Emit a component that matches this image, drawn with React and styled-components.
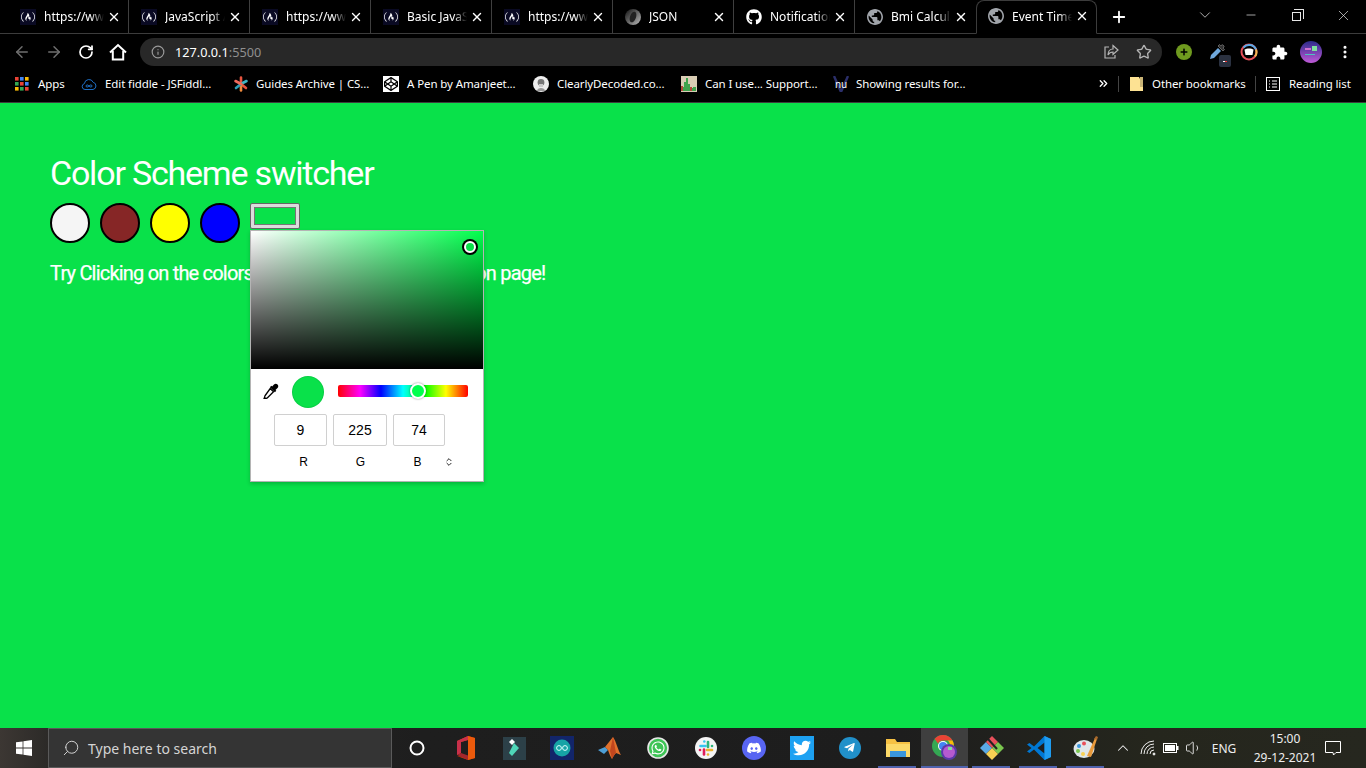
import React from 'react';
import styled, { createGlobalStyle } from 'styled-components';
import {
  ArrowLeft, ArrowRight, RotateCw, Info, Star, Search, ChevronDown, ChevronUp,
  Minus, X, Plus, EllipsisVertical, ChevronsUpDown, ChevronsRight, Volume1,
} from 'lucide-react';
import {
  FaFreeCodeCamp, FaGithub, FaWhatsapp, FaDiscord, FaTwitter,
  FaTelegramPlane, FaCodepen, FaPlus,
} from 'react-icons/fa';

const UI_FONT = '"Noto Sans", "Open Sans", sans-serif';
const PAGE_COLOR = 'rgb(9, 225, 74)';

const GlobalStyle = createGlobalStyle`
  html, body { margin: 0; padding: 0; height: 100%; overflow: hidden; }
  #root { height: 100%; }
  * { box-sizing: border-box; }
`;

const Screen = styled.div`
  width: 1366px;
  height: 768px;
  display: flex;
  flex-direction: column;
  overflow: hidden;
  background: #000;
  font-family: ${UI_FONT};
`;

/* ---------- tab strip ---------- */

const TabStrip = styled.div`
  height: 34px;
  flex: none;
  display: flex;
  align-items: stretch;
  padding-left: 8px;
  background: #000;
  border-bottom: 1px solid #3c3c3c;
`;

const Tab = styled.div`
  position: relative;
  width: 121px;
  height: ${(p) => (p.$active ? '34px' : '33px')};
  flex: none;
  display: flex;
  align-items: center;
  padding-left: ${(p) => (p.$active ? '11px' : '12px')};
  padding-bottom: ${(p) => (p.$active ? '2px' : '0')};
  color: #fff;
  font-size: 12px;
  background: #000;
  border-right: 1px solid ${(p) => (p.$active || p.$last ? 'transparent' : '#3f3f3f')};
  ${(p) => p.$active && `
    border: 1px solid #3c3c3c;
    border-bottom: 1px solid #000;
    border-radius: 8px 8px 0 0;
  `}
`;

const Favicon = styled.span`
  width: 16px;
  height: 16px;
  flex: none;
  display: flex;
  align-items: center;
  justify-content: center;
  background: ${(p) => p.$bg || 'transparent'};
  color: ${(p) => p.$fg || '#fff'};
`;

const TabTitle = styled.span`
  width: 60px;
  margin-left: 8px;
  white-space: nowrap;
  overflow: hidden;
  mask-image: linear-gradient(to right, #000 78%, transparent 100%);
`;

const TabClose = styled.span`
  margin-left: 2px;
  width: 16px;
  display: flex;
  justify-content: center;
  color: #fff;
`;

const NewTab = styled.div`
  width: 44px;
  display: flex;
  align-items: center;
  justify-content: center;
  color: #fff;
`;

const WindowControls = styled.div`
  margin-left: auto;
  display: flex;
  color: #e6e6e6;
  margin-top: -3px;
`;

const WindowButton = styled.div`
  width: 46px;
  display: flex;
  align-items: center;
  justify-content: center;
`;

const RestoreGlyph = styled.span`
  position: relative;
  width: 9px;
  height: 9px;
  border: 1px solid #e6e6e6;
  margin: 2px 1px 0 0;
  &::before {
    content: '';
    position: absolute;
    top: -4px;
    right: -4px;
    width: 9px;
    height: 9px;
    border-top: 1px solid #e6e6e6;
    border-right: 1px solid #e6e6e6;
  }
`;

/* ---------- toolbar ---------- */

const Toolbar = styled.div`
  height: 33px;
  flex: none;
  display: flex;
  align-items: center;
  padding: 4px 0 1px 6px;
  background: #000;
`;

const NavButton = styled.div`
  width: 32px;
  display: flex;
  justify-content: center;
  color: ${(p) => (p.$dim ? '#6f6f6f' : '#fff')};
`;

const Omnibox = styled.div`
  width: 1022px;
  height: 28px;
  margin-left: 6px;
  display: flex;
  align-items: center;
  padding: 0 10px 0 11px;
  border-radius: 14px;
  background: #282828;
  color: #9a9a9a;
`;

const Url = styled.span`
  margin-left: 10px;
  font-size: 12.7px;
  color: #fff;
  & > em { font-style: normal; color: #8f8f8f; }
`;

const OmniActions = styled.div`
  margin-left: auto;
  display: flex;
  align-items: center;
  gap: 17px;
  color: #b5b5b5;
`;

const Extensions = styled.div`
  display: flex;
  align-items: center;
  margin-left: 6px;
`;

const ExtSlot = styled.div`
  position: relative;
  width: ${(p) => p.$w || 32}px;
  display: flex;
  justify-content: center;
  align-items: center;
  color: #fff;
`;

const ExtBadge = styled.span`
  position: absolute;
  right: 3px;
  bottom: -6px;
  width: 12px;
  height: 12px;
  border-radius: 2px;
  background: #2a3140;
  display: flex;
  align-items: center;
  justify-content: center;
  &::after {
    content: '';
    width: 4px;
    height: 1px;
    background: linear-gradient(to right, #fff 50%, #e33 50%);
  }
`;

/* ---------- bookmarks bar ---------- */

const BookmarkBar = styled.div`
  height: 36px;
  flex: none;
  display: flex;
  align-items: center;
  padding: 0 15px 2px 15px;
  background: #000;
  border-bottom: 1px solid #3c3c3c;
  color: #fff;
  font-size: 11.5px;
  letter-spacing: -0.1px;
`;

const Bookmark = styled.div`
  width: ${(p) => p.$w}px;
  flex: none;
  display: flex;
  align-items: center;
  gap: ${(p) => p.$gap || 8}px;
  white-space: nowrap;
  & > svg { flex: none; }
`;

const BarRight = styled.div`
  margin-left: auto;
  display: flex;
  align-items: center;
`;

const BarDivider = styled.span`
  width: 1px;
  height: 16px;
  background: #444;
  margin: 0 ${(p) => p.$right}px 0 ${(p) => p.$left}px;
`;

const NuLabel = styled.span`
  font-size: 10px;
  line-height: 10px;
  color: #fff;
`;

const NuIcon = styled.span`
  position: relative;
  width: 16px;
  height: 16px;
  flex: none;
  display: flex;
  align-items: center;
  justify-content: center;
  color: #2b2f6b;
  & > svg { position: absolute; left: 0; top: 0; }
  & > span { position: relative; }
`;

/* ---------- page ---------- */

const Page = styled.main`
  flex: 1;
  padding: 50px 0 0 50px;
  background: ${PAGE_COLOR};
  color: #fff;
  font-family: Roboto, sans-serif;
`;

const Heading = styled.h1`
  margin: 0;
  height: 40px;
  font-size: 34px;
  line-height: 40px;
  font-weight: 400;
  letter-spacing: -1.2px;
`;

const SwatchRow = styled.div`
  margin-top: 10px;
  display: flex;
  align-items: flex-start;
  gap: 10px;
`;

const Swatch = styled.button`
  width: 40px;
  height: 40px;
  padding: 0;
  border-radius: 50%;
  border: 2px solid #000;
  background: ${(p) => p.$color};
`;

const ColorField = styled.div`
  position: relative;
  width: 50px;
  height: 26px;
  padding: 3px;
  border: 1px solid #666;
  border-radius: 2px;
  background: #dcdcdc;
`;

const ColorFieldFill = styled.div`
  height: 100%;
  border: 1px solid #767676;
  background: ${PAGE_COLOR};
`;

const Hint = styled.p`
  margin: 18px 0 0;
  height: 24px;
  font-size: 20px;
  line-height: 24px;
  font-weight: 400;
  letter-spacing: -0.8px;
  -webkit-text-stroke: 0.25px #fff;
`;

/* ---------- colour picker popup ---------- */

const Picker = styled.div`
  position: absolute;
  top: 26px;
  left: -1px;
  width: 234px;
  height: 252px;
  background: #fff;
  border: 1px solid #b4b4b4;
  box-shadow: 0 2px 4px rgba(0, 0, 0, 0.2);
  color: #000;
  font-family: "Liberation Sans", Arial, sans-serif;
`;

const SatArea = styled.div`
  position: relative;
  height: 138px;
  background:
    linear-gradient(to top, #000, rgba(0, 0, 0, 0)),
    linear-gradient(to right, #fff, hsl(138, 100%, 50%));
`;

const SatMarker = styled.span`
  position: absolute;
  left: 213px;
  top: 10px;
  width: 12px;
  height: 12px;
  border-radius: 50%;
  background: ${PAGE_COLOR};
  border: 2px solid #fff;
  box-shadow: 0 0 0 2px #000;
`;

const PickerControls = styled.div`
  display: flex;
  align-items: center;
  height: 46px;
  padding: 0 0 0 12px;
`;

const Dropper = styled.span`
  width: 16px;
  height: 16px;
  margin-top: -2px;
  display: flex;
  justify-content: center;
`;

const Preview = styled.span`
  width: 32px;
  height: 32px;
  margin-left: 13px;
  border-radius: 50%;
  background: ${PAGE_COLOR};
  border: 1px solid rgba(0, 0, 0, 0.08);
`;

const HueTrack = styled.div`
  position: relative;
  width: 130px;
  height: 12px;
  margin: -2px 0 0 14px;
  border-radius: 2px;
  background: linear-gradient(to right, #f00 0%, #f0f 17%, #00f 33%, #0ff 50%, #0f0 67%, #ff0 83%, #f00 100%);
`;

const HueThumb = styled.span`
  position: absolute;
  left: 72px;
  top: -2px;
  width: 16px;
  height: 16px;
  border-radius: 50%;
  background: hsl(138, 100%, 50%);
  border: 2px solid #fff;
  box-shadow: 0 0 2px rgba(0, 0, 0, 0.5);
`;

const InputRow = styled.div`
  display: flex;
  gap: 6px;
  margin-top: -1px;
  padding-left: 23px;
`;

const ChannelInput = styled.div`
  width: ${(p) => p.$w}px;
  height: 32px;
  display: flex;
  align-items: center;
  justify-content: center;
  border: 1px solid #d0d0d0;
  border-radius: 2px;
  font-size: 14px;
  color: #000;
`;

const LabelRow = styled.div`
  display: grid;
  grid-template-columns: repeat(3, 57px) 6px;
  padding-left: 24px;
  margin-top: 9px;
  height: 14px;
  align-items: center;
  font-size: 12px;
`;

const ChannelLabel = styled.span`
  text-align: center;
`;

const ModeToggle = styled.span`
  display: flex;
  justify-content: center;
  & > svg { flex: none; }
`;

/* ---------- taskbar ---------- */

const Taskbar = styled.footer`
  height: 40px;
  flex: none;
  display: flex;
  align-items: stretch;
  color: #fff;
  background: linear-gradient(to right, #3c3733 0, #2c2a28 48px, #1e1e1e 420px, #1d1d1d 900px, #25261d 1150px, #26271f 1366px);
`;

const StartButton = styled.div`
  width: 48px;
  flex: none;
  display: flex;
  align-items: center;
  justify-content: center;
`;

const SearchBox = styled.div`
  width: 344px;
  flex: none;
  display: flex;
  align-items: center;
  padding-left: 13px;
  background: #343434;
  border: 1px solid #5a5a5a;
  color: #d4d4d4;
  font-size: 14px;
`;

const SearchText = styled.span`
  margin-left: 8px;
`;

const TaskIcon = styled.div`
  position: relative;
  width: ${(p) => p.$w || 48}px;
  flex: none;
  display: flex;
  align-items: center;
  justify-content: center;
  background: ${(p) => (p.$current ? '#3f3f3f' : 'transparent')};
  ${(p) => p.$running && `
    &::after {
      content: '';
      position: absolute;
      bottom: 0;
      height: 2px;
      left: ${p.$current ? 0 : 4}px;
      right: ${p.$current ? 0 : 5}px;
      background: #4f62ad;
    }
  `}
`;

const Tray = styled.div`
  flex: none;
  margin-left: auto;
  display: flex;
  align-items: center;
  padding-right: 21px;
  color: #eee;
`;

const TrayIcon = styled.span`
  width: ${(p) => p.$w || 23}px;
  display: flex;
  justify-content: center;
`;

const Lang = styled.span`
  width: 38px;
  text-align: center;
  margin-right: 6px;
  font-size: 12px;
`;

const Clock = styled.div`
  width: 72px;
  text-align: center;
  font-size: 12px;
  line-height: 19px;
`;

const Notify = styled.span`
  width: 24px;
  display: flex;
  justify-content: center;
`;

/* ---------- drawn icons ---------- */

const HomeIcon = () => (
  <svg width="18" height="18" viewBox="0 0 18 18" fill="none" stroke="#fff" strokeWidth="2">
    <path d="M1 9.5L9 2l8 7.5M3.8 8v8.5h10.4V8" />
  </svg>
);

const ShareIcon = () => (
  <svg width="16" height="16" viewBox="0 0 16 16" fill="none" stroke="#b5b5b5" strokeWidth="1.2">
    <path d="M6 3H2v11h10v-3" />
    <path d="M10 1.5L15 6l-5 4.5V8C7.5 8 6 9 5 11c0-3.5 2-6 5-6z" />
  </svg>
);

const GlobeGlyph = () => (
  <svg width="16" height="16" viewBox="2 2 20 20" fill="#a0a4aa">
    <path d="M12 2C6.48 2 2 6.48 2 12s4.48 10 10 10 10-4.48 10-10S17.52 2 12 2zm-1 17.93c-3.95-.49-7-3.85-7-7.93 0-.62.08-1.21.21-1.79L9 15v1c0 1.1.9 2 2 2v1.93zm6.9-2.54c-.26-.81-1-1.39-1.9-1.39h-1v-3c0-.55-.45-1-1-1H8v-2h2c.55 0 1-.45 1-1V7h2c1.1 0 2-.9 2-2v-.41c2.93 1.19 5 4.06 5 7.41 0 2.08-.8 3.97-2.1 5.39z" />
  </svg>
);

const PuzzleIcon = () => (
  <svg width="17" height="17" viewBox="0 0 24 24" fill="#fff">
    <path d="M20.5 11H19V7c0-1.1-.9-2-2-2h-4V3.5C13 2.12 11.88 1 10.5 1S8 2.12 8 3.5V5H4c-1.1 0-1.99.9-1.99 2v3.8H3.5c1.49 0 2.7 1.21 2.7 2.7s-1.21 2.7-2.7 2.7H2V20c0 1.1.9 2 2 2h3.8v-1.5c0-1.49 1.21-2.7 2.7-2.7 1.49 0 2.7 1.21 2.7 2.7V22H17c1.1 0 2-.9 2-2v-4h1.5c1.38 0 2.5-1.12 2.5-2.5S21.88 11 20.5 11z" />
  </svg>
);

const AppsIcon = () => {
  const colors = ['#ea4335', '#4285f4', '#fbbc05', '#34a853', '#ea4335', '#4285f4', '#fbbc05', '#34a853', '#ea4335'];
  return (
    <svg width="14" height="14" viewBox="0 0 14 14">
      {colors.map((c, i) => (
        <rect key={i} x={(i % 3) * 5} y={Math.floor(i / 3) * 5} width="3.6" height="3.6" fill={c} />
      ))}
    </svg>
  );
};

const FiddleIcon = () => (
  <svg width="16" height="16" viewBox="0 0 16 16" fill="none" stroke="#1f6fc4" strokeWidth="1">
    <path d="M4 13.5a3 3 0 0 1-.6-5.9 4.6 4.6 0 0 1 8.8-1.3 3.7 3.7 0 0 1-.2 7.2z" />
    <path d="M8 10c-1-1.4-3-1.4-3 0s2 1.4 3 0 3-1.4 3 0-2 1.4-3 0z" />
  </svg>
);

const GuidesIcon = () => (
  <svg width="16" height="16" viewBox="0 0 16 16" strokeWidth="2.6" strokeLinecap="round">
    <path d="M8 8V1.5" stroke="#e8553f" />
    <path d="M8 8l5.5-3" stroke="#40b4c4" />
    <path d="M8 8l5 4" stroke="#e8553f" />
    <path d="M8 8v6.5" stroke="#f08a3c" />
    <path d="M8 8l-5 4" stroke="#2f9fb8" />
    <path d="M8 8L2.5 5" stroke="#f06a5c" />
  </svg>
);

const ClearlyIcon = () => (
  <svg width="16" height="16" viewBox="0 0 16 16">
    <circle cx="8" cy="8" r="8" fill="#eee" />
    <circle cx="8" cy="6.5" r="3.4" fill="#777" />
    <path d="M4 15c0-4 8-4 8 0z" fill="#999" />
    <rect x="6" y="8" width="4" height="3" fill="#ccc" />
  </svg>
);

const CanIUseIcon = () => (
  <svg width="16" height="16" viewBox="0 0 16 16">
    <rect width="16" height="16" fill="#d9cdb4" />
    <path d="M1 15V11h2V6h2V2h2v6h2v4h3v-1h3v4z" fill="#3fa34d" />
    <rect x="0" y="10" width="2" height="5" fill="#b5483a" />
    <rect x="9" y="11" width="2" height="4" fill="#b5483a" />
  </svg>
);

const FolderIcon = () => (
  <svg width="13" height="16" viewBox="0 0 13 16">
    <path d="M0 1h9l1 2 0 8h3v4H0z" fill="#fde293" />
    <path d="M10 1l3 0 0 13-3 0z" fill="#fde293" opacity="0.8" />
  </svg>
);

const ReadingIcon = () => (
  <svg width="14" height="14" viewBox="0 0 14 14" fill="none" stroke="#fff">
    <rect x="0.5" y="0.5" width="13" height="13" />
    <path d="M3 4h1M6 4h5M3 7h1M6 7h5M3 10h1M6 10h5" />
  </svg>
);

const DropperExt = () => (
  <svg width="18" height="18" viewBox="0 0 18 18">
    <path d="M2 16l1-4 7-7 3 3-7 7z" fill="#6fa8dc" />
    <path d="M10 3l5 5 1.5-1.5-1.3-1.3 1-2-1.5-1.5-2 1-1.2-1.2z" fill="#333" stroke="#aaa" strokeWidth="0.5" />
  </svg>
);

const RingExt = () => (
  <svg width="18" height="18" viewBox="0 0 18 18" fill="none">
    <circle cx="9" cy="9" r="7.5" stroke="#e8505b" strokeWidth="2" />
    <path d="M3.5 4.5A7.5 7.5 0 0 1 16 6.5" stroke="#5aa9e6" strokeWidth="2" />
    <path d="M16 6.5A7.5 7.5 0 0 1 15 13.5" stroke="#f2b950" strokeWidth="2" />
    <path d="M4.5 6.5c2-1.5 7-1.5 9 0l-1 5.5H5.5z" fill="#fff" />
  </svg>
);

const Avatar = () => (
  <svg width="22" height="22" viewBox="0 0 22 22">
    <defs>
      <linearGradient id="avatarFill" x1="0" y1="0" x2="0" y2="1">
        <stop offset="0" stopColor="#2c2a8a" />
        <stop offset="1" stopColor="#c05ad8" />
      </linearGradient>
    </defs>
    <circle cx="11" cy="11" r="11" fill="url(#avatarFill)" />
    <rect x="12" y="5" width="5" height="5" fill="#7fe0a0" />
    <rect x="5" y="7" width="6" height="2" fill="#d070d0" />
    <rect x="5" y="13" width="10" height="1" fill="#4fc0c0" />
  </svg>
);

const EyeDropper = () => (
  <svg width="16" height="16" viewBox="0 0 16 16">
    <path d="M7.2 5.5l3.3 3.3-6 6c-.5.5-1 .6-1.6.4l-1.3.8-.6-.6.8-1.3c-.2-.6 0-1.2.4-1.6z" fill="#fff" stroke="#000" strokeWidth="1.3" />
    <path d="M11 1.5c1-1 2.5-1 3.5 0s1 2.5 0 3.5L12.5 7l.8.8-1.4 1.4-5-5 1.4-1.4.8.8z" fill="#000" />
  </svg>
);

const JsonIcon = () => (
  <svg width="16" height="16" viewBox="0 0 16 16">
    <defs>
      <linearGradient id="jsonFill" x1="0" y1="0" x2="1" y2="1">
        <stop offset="0" stopColor="#111" />
        <stop offset="1" stopColor="#bbb" />
      </linearGradient>
    </defs>
    <circle cx="8" cy="8" r="8" fill="url(#jsonFill)" />
    <ellipse cx="8" cy="8" rx="3" ry="5.5" fill="#222" transform="rotate(20 8 8)" />
  </svg>
);

const WindowsLogo = () => (
  <svg width="16" height="16" viewBox="0 0 16 16" fill="#fff">
    <path d="M0 2.3l6.6-.9v6.2H0zM7.4 1.3L16 0v7.6H7.4zM0 8.4h6.6v6.2L0 13.7zM7.4 8.4H16V16l-8.6-1.3z" />
  </svg>
);

const CortanaIcon = () => (
  <svg width="16" height="16" viewBox="0 0 16 16" fill="none" stroke="#fff" strokeWidth="2">
    <circle cx="8" cy="8" r="6.5" />
  </svg>
);

const OfficeIcon = () => (
  <svg width="20" height="24" viewBox="0 0 20 24">
    <path d="M1 5l11-5 7 2v20l-7 2-11-4 11 1V4L5 6v11l-4 2z" fill="#d83b01" />
    <path d="M1 5l11-5v4L5 6v11l-4 2z" fill="#c8304a" />
    <path d="M1 19l4-2 7 2.5V24z" fill="#a4262c" />
    <path d="M12 0l7 2v20l-7 2z" fill="#eb5a0c" />
  </svg>
);

const FilmoraIcon = () => (
  <svg width="23" height="23" viewBox="0 0 23 23">
    <rect width="23" height="23" fill="#2c4048" />
    <path d="M6 5l3-3 3 3-3 3z" fill="#fff" />
    <path d="M11 6l5 5-7 8-3-3z" fill="#4fd6b8" />
  </svg>
);

const ArduinoIcon = () => (
  <svg width="24" height="24" viewBox="0 0 24 24" fill="none">
    <rect width="24" height="24" fill="#12256a" />
    <circle cx="12" cy="12" r="8.5" fill="#16a3a6" />
    <circle cx="9" cy="12" r="2.4" stroke="#dff" strokeWidth="1" />
    <circle cx="15" cy="12" r="2.4" stroke="#dff" strokeWidth="1" />
  </svg>
);

const MatlabIcon = () => (
  <svg width="24" height="24" viewBox="0 0 24 24">
    <path d="M0 14l7-3 3 3-4 4z" fill="#4d9fd6" />
    <path d="M7 11l8-10c3 4 5 13 8 18l-5-2c-2 2-3 4-4 6-2-3-3-6-4-9z" fill="#e0702c" />
    <path d="M15 1l-3 14 2 8c1-2 2-4 4-6z" fill="#c1461e" />
  </svg>
);

const WhatsappIcon = () => (
  <svg width="22" height="22" viewBox="0 0 22 22">
    <circle cx="11" cy="11" r="10" fill="#3ec456" stroke="#e8e8e8" strokeWidth="1.6" />
    <FaWhatsapp x="3.5" y="3.5" size="15" color="#fff" />
  </svg>
);

const SlackIcon = () => (
  <svg width="22" height="22" viewBox="0 0 22 22" strokeWidth="2.6" strokeLinecap="round">
    <circle cx="11" cy="11" r="11" fill="#f4f4f4" />
    <path d="M5.5 9h5" stroke="#36c5f0" />
    <path d="M9.3 4.5v0" stroke="#36c5f0" />
    <path d="M13 5v5" stroke="#2eb67d" />
    <path d="M17 9h0" stroke="#2eb67d" />
    <path d="M12 13h5" stroke="#ecb22e" />
    <path d="M13 17.5h0" stroke="#ecb22e" />
    <path d="M9 12.5v5" stroke="#e01e5a" />
    <path d="M5 13h0" stroke="#e01e5a" />
  </svg>
);

const DiscordIcon = () => (
  <svg width="24" height="24" viewBox="0 0 24 24">
    <circle cx="12" cy="12" r="12" fill="#5865f2" />
    <FaDiscord x="4.5" y="4.5" size="15" color="#fff" />
  </svg>
);

const TwitterIcon = () => (
  <svg width="24" height="24" viewBox="0 0 24 24">
    <rect width="24" height="24" fill="#1da1f2" />
    <FaTwitter x="3" y="3" size="18" color="#fff" />
  </svg>
);

const TelegramIcon = () => (
  <svg width="22" height="22" viewBox="0 0 22 22">
    <circle cx="11" cy="11" r="11" fill="#2190c9" />
    <FaTelegramPlane x="4.5" y="4.5" size="12" color="#fff" />
  </svg>
);

const ExplorerIcon = () => (
  <svg width="24" height="22" viewBox="0 0 24 22">
    <path d="M0 2h9l2 3h13v15H0z" fill="#f6c143" />
    <rect x="0" y="7" width="24" height="13" fill="#fcd968" />
    <rect x="4" y="14" width="16" height="6" fill="#3a96dd" />
  </svg>
);

const ChromeIcon = () => (
  <svg width="26" height="26" viewBox="0 0 26 26">
    <circle cx="11" cy="11" r="11" fill="#34a853" />
    <path d="M11 0a11 11 0 0 1 9.5 5.5H11a5.5 5.5 0 0 0-5 3L2.6 3.8A11 11 0 0 1 11 0z" fill="#ea4335" />
    <path d="M20.5 5.5A11 11 0 0 1 11 22l4.5-8a5 5 0 0 0 0-8.5z" fill="#fbbc05" />
    <circle cx="11" cy="11" r="5" fill="#fff" />
    <circle cx="11" cy="11" r="4" fill="#4285f4" />
    <circle cx="17" cy="17" r="8" fill="#5a3aa8" />
    <circle cx="17" cy="17" r="6" fill="#b55ad0" />
    <rect x="16" y="12" width="4" height="3" fill="#7fe0a0" />
  </svg>
);

const KrakenIcon = () => (
  <svg width="26" height="26" viewBox="0 0 26 26">
    <path d="M1 13l6-6 6 6-6 6z" fill="#5aa9e6" />
    <path d="M7 7l6-6 6 6-6 6z" fill="#e8505b" />
    <path d="M13 13l6-6 6 6-6 6z" fill="#7ac74f" />
    <path d="M7 19l6-6 6 6-6 6z" fill="#f7d154" />
    <path d="M9 4l9 10" stroke="#222" strokeWidth="2" />
  </svg>
);

const VsCodeIcon = () => (
  <svg width="24" height="24" viewBox="0 0 24 24">
    <path d="M17.5 0L24 3v18l-6.5 3L7 13.5 2.5 17 0 15.5 4.5 12 0 8.5 2.5 7 7 10.5z" fill="#0078d4" />
    <path d="M17.5 6.5L10.5 12l7 5.5z" fill="#1e1e1e" />
    <path d="M17.5 0L24 3v18l-6.5 3z" fill="#1f9cf0" />
  </svg>
);

const PaintIcon = () => (
  <svg width="26" height="26" viewBox="0 0 26 26">
    <ellipse cx="11" cy="14" rx="10.5" ry="9" fill="#dfe6ea" />
    <circle cx="6" cy="11" r="2" fill="#3a96dd" />
    <circle cx="11" cy="8.5" r="2" fill="#e8505b" />
    <circle cx="5" cy="16" r="2" fill="#7ac74f" />
    <circle cx="10" cy="19" r="2" fill="#f7d154" />
    <path d="M14 21L22 3l2 1-6 18z" fill="#e89a3c" />
    <path d="M21 4l2-3 2 1-1 3z" fill="#a86a2c" />
  </svg>
);

const SignalIcon = () => (
  <svg width="16" height="16" viewBox="0 0 16 16" fill="none" stroke="#eee">
    <path d="M1 14a13 13 0 0 1 13-13M4 14a10 10 0 0 1 10-10M7 14a7 7 0 0 1 7-7M10 14a4 4 0 0 1 4-4" />
    <circle cx="14" cy="14" r="1" fill="#eee" />
  </svg>
);

const BatteryIcon = () => (
  <svg width="16" height="10" viewBox="0 0 16 10" fill="none">
    <rect x="0.5" y="0.5" width="13" height="9" stroke="#fff" />
    <rect x="2" y="2" width="10" height="6" fill="#fff" />
    <rect x="14" y="3" width="1.5" height="4" fill="#fff" />
  </svg>
);

const NotifyIcon = () => (
  <svg width="16" height="16" viewBox="0 0 16 16" fill="none" stroke="#fff">
    <path d="M.5 1.5h15v11h-4.5L8.5 15 8 12.5H.5z" />
  </svg>
);

/* ---------- data ---------- */

const CampIcon = () => <Favicon $bg="#0a0a23"><FaFreeCodeCamp size={14} /></Favicon>;
const GlobeIcon = () => <Favicon><GlobeGlyph /></Favicon>;

const tabs = [
  { title: 'https://www.freecodecamp.org', icon: <CampIcon /> },
  { title: 'JavaScript Array', icon: <CampIcon /> },
  { title: 'https://www.freecodecamp.org', icon: <CampIcon /> },
  { title: 'Basic JavaScript', icon: <CampIcon /> },
  { title: 'https://www.freecodecamp.org', icon: <CampIcon /> },
  { title: 'JSON', icon: <Favicon><JsonIcon /></Favicon> },
  { title: 'Notifications', icon: <Favicon><FaGithub size={16} /></Favicon> },
  { title: 'Bmi Calculator', icon: <GlobeIcon />, last: true },
  { title: 'Event Timer', icon: <GlobeIcon />, active: true },
];

const bookmarks = [
  { label: 'Apps', icon: <AppsIcon />, width: 66, gap: 9 },
  { label: 'Edit fiddle - JSFiddl...', icon: <FiddleIcon />, width: 152 },
  { label: 'Guides Archive | CS...', icon: <GuidesIcon />, width: 150, gap: 7 },
  { label: 'A Pen by Amanjeet...', icon: <Favicon $bg="#fff" $fg="#000"><FaCodepen size={14} /></Favicon>, width: 150 },
  { label: 'ClearlyDecoded.co...', icon: <ClearlyIcon />, width: 148 },
  { label: 'Can I use... Support...', icon: <CanIUseIcon />, width: 152 },
  {
    label: 'Showing results for...',
    icon: (
      <NuIcon>
        <svg width="16" height="16" viewBox="0 0 16 16" fill="none" stroke="currentColor" strokeWidth="2.4"><path d="M1 0l7 16 7-16" /></svg>
        <NuLabel>nu</NuLabel>
      </NuIcon>
    ),
    width: 160,
    gap: 7,
  },
];

const taskIcons = [
  { icon: <OfficeIcon />, width: 48 },
  { icon: <FilmoraIcon />, width: 48 },
  { icon: <ArduinoIcon />, width: 48 },
  { icon: <MatlabIcon />, width: 48 },
  { icon: <WhatsappIcon />, width: 48 },
  { icon: <SlackIcon />, width: 48 },
  { icon: <DiscordIcon />, width: 48 },
  { icon: <TwitterIcon />, width: 48 },
  { icon: <TelegramIcon />, width: 48 },
  { icon: <ExplorerIcon />, width: 47, running: true },
  { icon: <ChromeIcon />, width: 47, running: true, current: true },
  { icon: <KrakenIcon />, width: 47, running: true },
  { icon: <VsCodeIcon />, width: 47, running: true },
  { icon: <PaintIcon />, width: 47, running: true },
];

const swatches = ['#f5f5f5', '#862626', '#ffff00', '#0000ff'];

const channels = [
  { label: 'R', value: '9', width: 53 },
  { label: 'G', value: '225', width: 54 },
  { label: 'B', value: '74', width: 52 },
];

const ColorPicker = () => (
  <Picker>
    <SatArea><SatMarker /></SatArea>
    <PickerControls>
      <Dropper><EyeDropper /></Dropper>
      <Preview />
      <HueTrack><HueThumb /></HueTrack>
    </PickerControls>
    <InputRow>
      {channels.map((c) => (
        <ChannelInput key={c.label} $w={c.width}>{c.value}</ChannelInput>
      ))}
    </InputRow>
    <LabelRow>
      {channels.map((c) => (
        <ChannelLabel key={c.label}>{c.label}</ChannelLabel>
      ))}
      <ModeToggle><ChevronsUpDown size={10} strokeWidth={2} /></ModeToggle>
    </LabelRow>
  </Picker>
);

export default function App() {
  return (
    <Screen>
      <GlobalStyle />
      <TabStrip>
        {tabs.map((t, i) => (
          <Tab key={i} $active={t.active} $last={t.last}>
            {t.icon}
            <TabTitle>{t.title}</TabTitle>
            <TabClose><X size={14} strokeWidth={2.4} /></TabClose>
          </Tab>
        ))}
        <NewTab><Plus size={18} strokeWidth={2.4} /></NewTab>
        <WindowControls>
          <WindowButton><ChevronDown size={18} strokeWidth={1} /></WindowButton>
          <WindowButton><Minus size={14} strokeWidth={1.2} /></WindowButton>
          <WindowButton><RestoreGlyph /></WindowButton>
          <WindowButton><X size={17} strokeWidth={1} /></WindowButton>
        </WindowControls>
      </TabStrip>

      <Toolbar>
        <NavButton $dim><ArrowLeft size={18} /></NavButton>
        <NavButton $dim><ArrowRight size={18} /></NavButton>
        <NavButton><RotateCw size={16} strokeWidth={2.6} /></NavButton>
        <NavButton><HomeIcon /></NavButton>
        <Omnibox>
          <Info size={14} />
          <Url>127.0.0.1<em>:5500</em></Url>
          <OmniActions>
            <ShareIcon />
            <Star size={16} />
          </OmniActions>
        </Omnibox>
        <Extensions>
          <ExtSlot $w={32}>
            <svg width="16" height="16" viewBox="0 0 16 16"><circle cx="8" cy="8" r="8" fill="#6f9a1f" /></svg>
            <FaPlus size={8} color="#000" style={{ position: 'absolute' }} />
          </ExtSlot>
          <ExtSlot $w={34}><DropperExt /><ExtBadge /></ExtSlot>
          <ExtSlot $w={29}><RingExt /></ExtSlot>
          <ExtSlot $w={32}><PuzzleIcon /></ExtSlot>
          <ExtSlot $w={32}><Avatar /></ExtSlot>
          <ExtSlot $w={36}><EllipsisVertical size={16} strokeWidth={2.6} /></ExtSlot>
        </Extensions>
      </Toolbar>

      <BookmarkBar>
        {bookmarks.map((b) => (
          <Bookmark key={b.label} $w={b.width} $gap={b.gap}>
            {b.icon}
            <span>{b.label}</span>
          </Bookmark>
        ))}
        <BarRight>
          <ChevronsRight size={13} strokeWidth={2.4} />
          <BarDivider $left={8} $right={11} />
          <Bookmark $w={125} $gap={9}>
            <FolderIcon />
            <span>Other bookmarks</span>
          </Bookmark>
          <BarDivider $left={0} $right={10} />
          <Bookmark $w={85} $gap={9}>
            <ReadingIcon />
            <span>Reading list</span>
          </Bookmark>
        </BarRight>
      </BookmarkBar>

      <Page>
        <Heading>Color Scheme switcher</Heading>
        <SwatchRow>
          {swatches.map((c) => <Swatch key={c} $color={c} />)}
          <ColorField>
            <ColorFieldFill />
            <ColorPicker />
          </ColorField>
        </SwatchRow>
        <Hint>Try Clicking on the colors above to change schemes on page!</Hint>
      </Page>

      <Taskbar>
        <StartButton><WindowsLogo /></StartButton>
        <SearchBox>
          <Search size={18} strokeWidth={1.3} style={{ transform: 'scaleX(-1)' }} />
          <SearchText>Type here to search</SearchText>
        </SearchBox>
        <TaskIcon $w={50}><CortanaIcon /></TaskIcon>
        {taskIcons.map((t, i) => (
          <TaskIcon key={i} $w={t.width} $running={t.running} $current={t.current}>{t.icon}</TaskIcon>
        ))}
        <Tray>
          <TrayIcon $w={27}><ChevronUp size={18} strokeWidth={1.4} /></TrayIcon>
          <TrayIcon><SignalIcon /></TrayIcon>
          <TrayIcon><BatteryIcon /></TrayIcon>
          <TrayIcon><Volume1 size={18} strokeWidth={1.2} /></TrayIcon>
          <Lang>ENG</Lang>
          <Clock>15:00<br />29-12-2021</Clock>
          <Notify><NotifyIcon /></Notify>
        </Tray>
      </Taskbar>
    </Screen>
  );
}
